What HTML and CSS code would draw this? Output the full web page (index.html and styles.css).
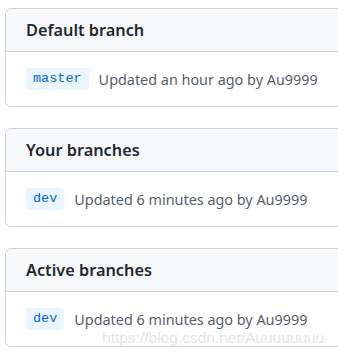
FILE: index.html
```html
<!DOCTYPE html>
<html>
  <head>
    <meta charset="UTF-8">
    <link rel="stylesheet" href="styles.css">
  </head>
  <body>
    <div class="pagina">
      <div class="caja">
        <div class="cabecera">Default branch</div>
        <div class="fila">
          <span class="rama">master</span>
          <span class="info">Updated an hour ago by Au9999</span>
        </div>
      </div>
      <div class="caja">
        <div class="cabecera">Your branches</div>
        <div class="fila">
          <span class="rama">dev</span>
          <span class="info">Updated 6 minutes ago by Au9999</span>
        </div>
      </div>
      <div class="caja">
        <div class="cabecera">Active branches</div>
        <div class="fila">
          <span class="rama">dev</span>
          <span class="info">Updated 6 minutes ago by Au9999</span>
        </div>
      </div>
    </div>
    <div class="marcaagua">https://blog.csdn.net/Auuuuuuuu</div>
  </body>
</html>
```

FILE: styles.css
```css
html{background-color: white;}
body{margin: 0; overflow: hidden; font-family: "Noto Sans", "Open Sans", sans-serif;}
.pagina{
  padding: 8px 0 0 5px;
  width: 380px;
}
.caja{
  border: 1px solid #d1d5da;
  border-radius: 6px;
  margin-bottom: 21px;
}
.cabecera{
  height: 42px;
  display: flex;
  align-items: center;
  padding: 0 20px;
  background-color: #f6f8fa;
  border-bottom: 1px solid #d1d5da;
  border-radius: 6px 6px 0 0;
  font-size: 16.3px;
  font-weight: 600;
  color: #24292e;
}
.fila{
  height: 54px;
  display: flex;
  align-items: center;
  padding: 0 20px;
}
.rama{
  font-family: "Liberation Mono", monospace;
  font-size: 13.5px;
  color: #0366d6;
  background-color: #eaf5ff;
  border-radius: 4px;
  padding: 0 7px;
  height: 22px;
  line-height: 22px;
}
.info{
  margin-left: 10px;
  font-size: 14.4px;
  color: #586069;
}
.marcaagua{
  position: absolute;
  left: 102px;
  top: 329px;
  line-height: 18px;
  font-family: "Liberation Sans", Arial, sans-serif;
  font-size: 15.5px;
  color: rgba(220, 220, 220, 0.8);
}
```
